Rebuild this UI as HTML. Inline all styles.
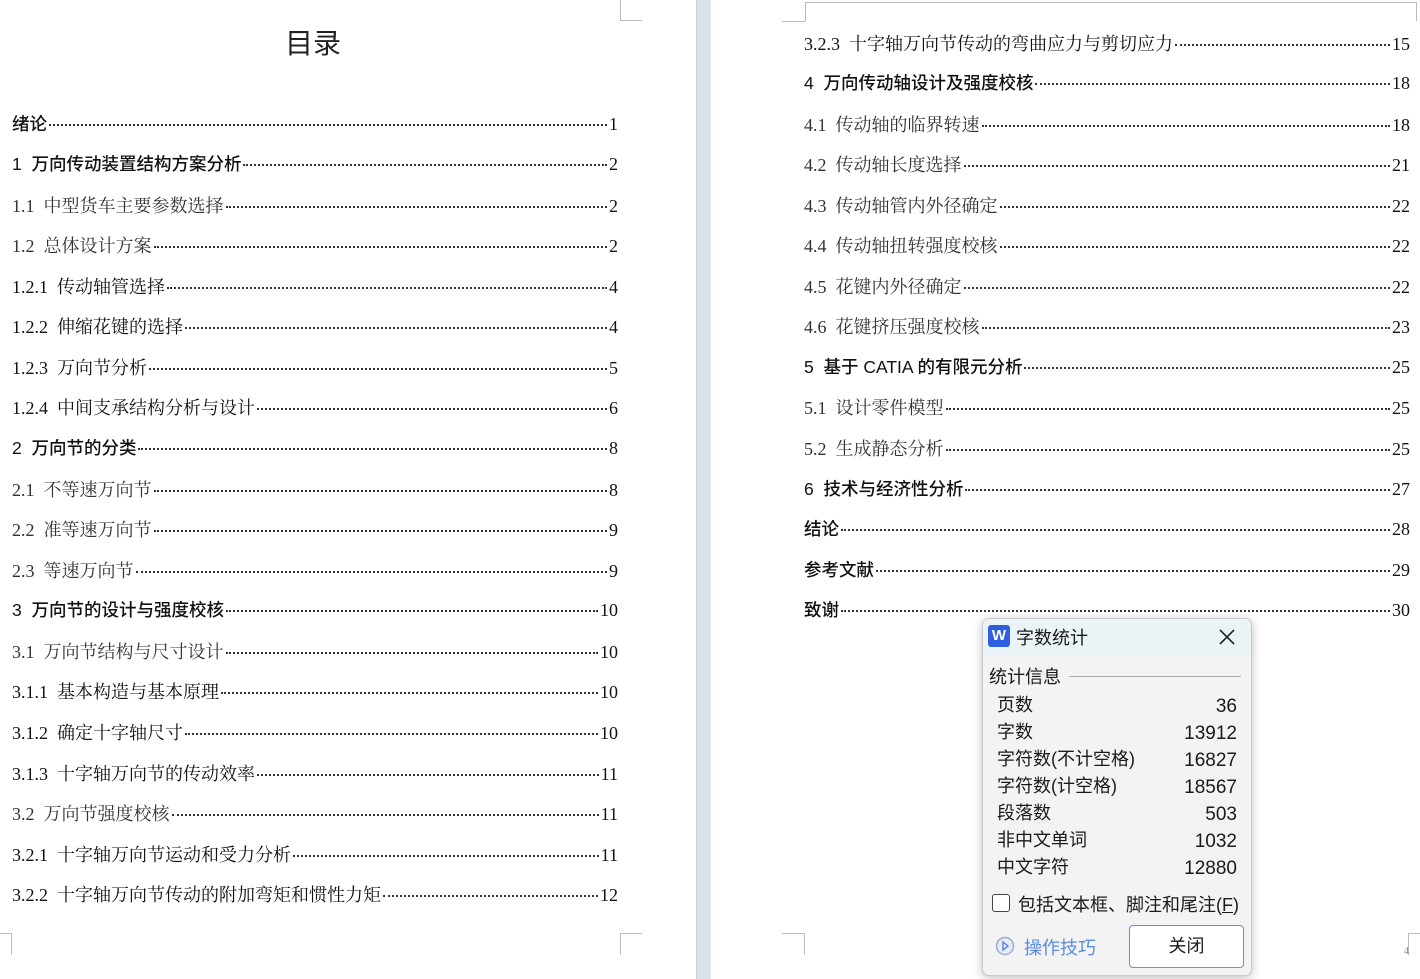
<!DOCTYPE html>
<html><head><meta charset="utf-8"><style>
*{margin:0;padding:0;box-sizing:border-box}
body{width:1420px;height:979px;overflow:hidden;background:#fff;position:relative;font-family:"Liberation Serif","Noto Serif CJK SC",serif;color:#222}
.gap{position:absolute;left:696px;top:0;width:15px;height:979px;background:#dbe3e8;border-left:1px solid #c8d0d6;border-right:1px solid #e8edf0}
.m{position:absolute;border-color:#bbb;border-style:solid;border-width:0}
.t{position:absolute;left:0;width:626px;text-align:center;top:22px;font:28px "Liberation Sans","Noto Sans CJK SC",sans-serif;color:#222}
.e{position:absolute;display:flex;align-items:baseline;font-size:18px;height:24px;white-space:nowrap;color:#111}
.e .d{flex:1;border-bottom:2px dotted #333;margin:0 2px;transform:translateY(-4px)}
.e span:last-child{font-family:"Liberation Serif",serif;font-size:18px;font-weight:normal}
.e.b{font-family:"Liberation Sans","Noto Sans CJK SC",sans-serif;font-weight:500;font-size:17.5px}
.e.s span:first-child{color:#333}
.dlg{position:absolute;left:982px;top:618px;width:270px;height:358px;background:#f3f3f3;border:1px solid #c9c9c9;border-radius:7px;box-shadow:0 2px 10px rgba(0,0,0,.25);font-family:"Liberation Sans","Noto Sans CJK SC",sans-serif;color:#1a1a1a;overflow:hidden}
.hd{height:37px;background:#eaf4f6;position:relative}
.row{position:absolute;left:14px;width:240px;font-size:18px;display:flex;justify-content:space-between;align-items:baseline;line-height:24px}
.row span:last-child{font-size:19px;position:relative;top:1px}
</style></head><body>
<div class="gap"></div>
<div class="m" style="left:620px;top:0;width:22px;height:21px;border-left-width:1px;border-bottom-width:1px"></div>
<div class="m" style="left:0;top:933px;width:12px;height:22px;border-top-width:1px;border-right-width:1px"></div>
<div class="m" style="left:620px;top:933px;width:22px;height:22px;border-top-width:1px;border-left-width:1px"></div>
<div class="m" style="left:805px;top:2px;width:612px;height:19px;border-top-width:1px;border-left-width:1px;border-right-width:1px"></div>
<div class="m" style="left:782px;top:21px;width:23px;height:1px;border-top-width:1px"></div>
<div class="m" style="left:782px;top:933px;width:23px;height:22px;border-top-width:1px;border-right-width:1px"></div>
<div class="m" style="left:1408px;top:933px;width:12px;height:22px;border-top-width:1px;border-left-width:1px"></div>
<div style="position:absolute;left:1404px;top:946px;font-size:10px;color:#888">4</div>
<div class="t">目录</div>

<div class="e b" style="left:12px;width:606px;top:111px"><span>绪论</span><span class="d"></span><span>1</span></div>
<div class="e b" style="left:12px;width:606px;top:151px"><span>1&nbsp; 万向传动装置结构方案分析</span><span class="d"></span><span>2</span></div>
<div class="e s" style="left:12px;width:606px;top:192px"><span>1.1&nbsp; 中型货车主要参数选择</span><span class="d"></span><span>2</span></div>
<div class="e s" style="left:12px;width:606px;top:232px"><span>1.2&nbsp; 总体设计方案</span><span class="d"></span><span>2</span></div>
<div class="e k" style="left:12px;width:606px;top:273px"><span>1.2.1&nbsp; 传动轴管选择</span><span class="d"></span><span>4</span></div>
<div class="e k" style="left:12px;width:606px;top:313px"><span>1.2.2&nbsp; 伸缩花键的选择</span><span class="d"></span><span>4</span></div>
<div class="e k" style="left:12px;width:606px;top:354px"><span>1.2.3&nbsp; 万向节分析</span><span class="d"></span><span>5</span></div>
<div class="e k" style="left:12px;width:606px;top:394px"><span>1.2.4&nbsp; 中间支承结构分析与设计</span><span class="d"></span><span>6</span></div>
<div class="e b" style="left:12px;width:606px;top:435px"><span>2&nbsp; 万向节的分类</span><span class="d"></span><span>8</span></div>
<div class="e s" style="left:12px;width:606px;top:476px"><span>2.1&nbsp; 不等速万向节</span><span class="d"></span><span>8</span></div>
<div class="e s" style="left:12px;width:606px;top:516px"><span>2.2&nbsp; 准等速万向节</span><span class="d"></span><span>9</span></div>
<div class="e s" style="left:12px;width:606px;top:557px"><span>2.3&nbsp; 等速万向节</span><span class="d"></span><span>9</span></div>
<div class="e b" style="left:12px;width:606px;top:597px"><span>3&nbsp; 万向节的设计与强度校核</span><span class="d"></span><span>10</span></div>
<div class="e s" style="left:12px;width:606px;top:638px"><span>3.1&nbsp; 万向节结构与尺寸设计</span><span class="d"></span><span>10</span></div>
<div class="e k" style="left:12px;width:606px;top:678px"><span>3.1.1&nbsp; 基本构造与基本原理</span><span class="d"></span><span>10</span></div>
<div class="e k" style="left:12px;width:606px;top:719px"><span>3.1.2&nbsp; 确定十字轴尺寸</span><span class="d"></span><span>10</span></div>
<div class="e k" style="left:12px;width:606px;top:760px"><span>3.1.3&nbsp; 十字轴万向节的传动效率</span><span class="d"></span><span>11</span></div>
<div class="e s" style="left:12px;width:606px;top:800px"><span>3.2&nbsp; 万向节强度校核</span><span class="d"></span><span>11</span></div>
<div class="e k" style="left:12px;width:606px;top:841px"><span>3.2.1&nbsp; 十字轴万向节运动和受力分析</span><span class="d"></span><span>11</span></div>
<div class="e k" style="left:12px;width:606px;top:881px"><span>3.2.2&nbsp; 十字轴万向节传动的附加弯矩和惯性力矩</span><span class="d"></span><span>12</span></div>

<div class="e k" style="left:804px;width:606px;top:30px"><span>3.2.3&nbsp; 十字轴万向节传动的弯曲应力与剪切应力</span><span class="d"></span><span>15</span></div>
<div class="e b" style="left:804px;width:606px;top:70px"><span>4&nbsp; 万向传动轴设计及强度校核</span><span class="d"></span><span>18</span></div>
<div class="e s" style="left:804px;width:606px;top:111px"><span>4.1&nbsp; 传动轴的临界转速</span><span class="d"></span><span>18</span></div>
<div class="e s" style="left:804px;width:606px;top:151px"><span>4.2&nbsp; 传动轴长度选择</span><span class="d"></span><span>21</span></div>
<div class="e s" style="left:804px;width:606px;top:192px"><span>4.3&nbsp; 传动轴管内外径确定</span><span class="d"></span><span>22</span></div>
<div class="e s" style="left:804px;width:606px;top:232px"><span>4.4&nbsp; 传动轴扭转强度校核</span><span class="d"></span><span>22</span></div>
<div class="e s" style="left:804px;width:606px;top:273px"><span>4.5&nbsp; 花键内外径确定</span><span class="d"></span><span>22</span></div>
<div class="e s" style="left:804px;width:606px;top:313px"><span>4.6&nbsp; 花键挤压强度校核</span><span class="d"></span><span>23</span></div>
<div class="e b" style="left:804px;width:606px;top:354px"><span>5&nbsp; 基于 CATIA 的有限元分析</span><span class="d"></span><span>25</span></div>
<div class="e s" style="left:804px;width:606px;top:394px"><span>5.1&nbsp; 设计零件模型</span><span class="d"></span><span>25</span></div>
<div class="e s" style="left:804px;width:606px;top:435px"><span>5.2&nbsp; 生成静态分析</span><span class="d"></span><span>25</span></div>
<div class="e b" style="left:804px;width:606px;top:476px"><span>6&nbsp; 技术与经济性分析</span><span class="d"></span><span>27</span></div>
<div class="e b" style="left:804px;width:606px;top:516px"><span>结论</span><span class="d"></span><span>28</span></div>
<div class="e b" style="left:804px;width:606px;top:557px"><span>参考文献</span><span class="d"></span><span>29</span></div>
<div class="e b" style="left:804px;width:606px;top:597px"><span>致谢</span><span class="d"></span><span>30</span></div>

<div class="dlg">
 <div class="hd">
  <div style="position:absolute;left:5px;top:6px;width:22px;height:22px;background:#2e5fe0;border-radius:3px;color:#fff;font:bold 15px 'Liberation Sans',sans-serif;text-align:center;line-height:21px">W</div>
  <div style="position:absolute;left:33px;top:5px;font-size:18px">字数统计</div>
  <svg style="position:absolute;left:236px;top:10px" width="16" height="16"><path d="M1 1L15 15M15 1L1 15" stroke="#222" stroke-width="1.6"/></svg>
 </div>
 <div style="position:absolute;left:6px;top:44px;font-size:18px">统计信息</div>
 <div style="position:absolute;left:86px;top:57px;width:172px;height:1px;background:#aaa"></div>
 <div class="row" style="top:74px"><span>页数</span><span>36</span></div>
 <div class="row" style="top:101px"><span>字数</span><span>13912</span></div>
 <div class="row" style="top:128px"><span>字符数(不计空格)</span><span>16827</span></div>
 <div class="row" style="top:155px"><span>字符数(计空格)</span><span>18567</span></div>
 <div class="row" style="top:182px"><span>段落数</span><span>503</span></div>
 <div class="row" style="top:209px"><span>非中文单词</span><span>1032</span></div>
 <div class="row" style="top:236px"><span>中文字符</span><span>12880</span></div>
 <div style="position:absolute;left:9px;top:275px;width:18px;height:18px;border:1.3px solid #444;border-radius:3px;background:#fff"></div>
 <div style="position:absolute;left:35px;top:272px;font-size:18px">包括文本框、脚注和尾注(<u>F</u>)</div>
 <svg style="position:absolute;left:12px;top:317px" width="20" height="20"><circle cx="10" cy="10" r="8.5" fill="#e6ebf5" stroke="#9aaad0" stroke-width="1.5"/><path d="M8 6L13 10L8 14Z" fill="none" stroke="#5a7fd6" stroke-width="1.4"/></svg>
 <div style="position:absolute;left:41px;top:315px;font-size:18px;color:#5a8be0">操作技巧</div>
 <div style="position:absolute;left:146px;top:306px;width:115px;height:43px;border:1px solid #6b8fc9;border-radius:4px;background:#fff;text-align:center;line-height:41px;font-size:18px">关闭</div>
</div>
</body></html>
